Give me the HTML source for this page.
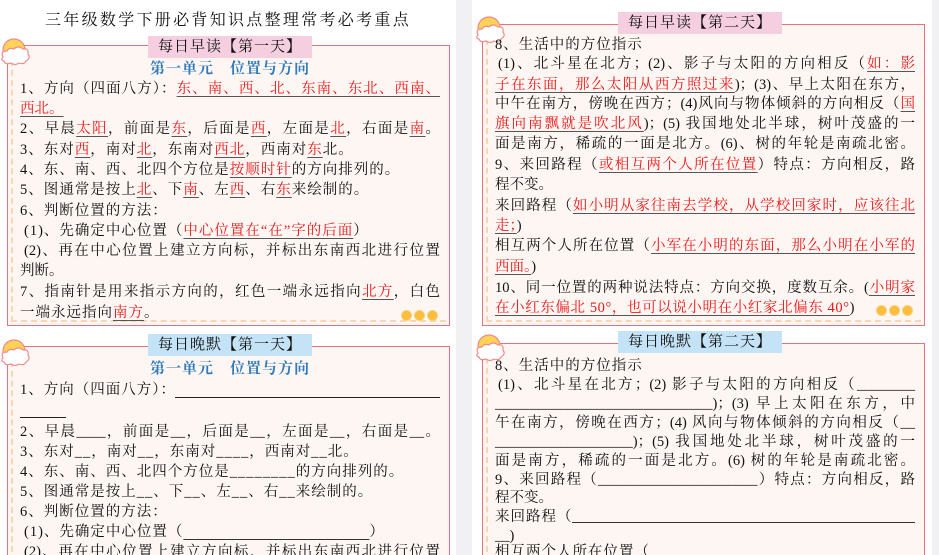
<!DOCTYPE html>
<html><head><meta charset="utf-8"><style>
*{margin:0;padding:0;box-sizing:border-box}
html,body{width:939px;height:555px;overflow:hidden}
body{background:#fff;font-family:"Liberation Serif","Noto Serif CJK SC",serif;color:#111}
#w{position:relative;width:939px;height:555px;overflow:hidden}
.gut{position:absolute;top:0;height:555px;background:#f1f1f4}
.box{position:absolute;border:1.5px solid #e9707c;background:#fdf6f3}
.box:before{content:"";position:absolute;left:3px;top:14px;bottom:3px;border-left:2px dashed #fbd6b0}
.box:after{content:"";position:absolute;left:3px;right:3px;bottom:3px;border-bottom:2px dashed #fbd6b0}
.box.open{border-bottom:none}
.box.open:after{display:none}
.tab{position:absolute;font-size:15px;line-height:22px;padding:0 10px;letter-spacing:1px;white-space:nowrap;transform:translateX(-50%)}
.pk{background:#f5cfe0}.bl{background:#c5e3f6}
.unit{position:absolute;color:#2f7bbd;font-weight:bold;font-size:15px;line-height:20px;white-space:nowrap;transform:translateX(-50%);letter-spacing:1px}
.l{position:absolute;font-size:14.5px;line-height:20px;white-space:nowrap}
.cut{height:13px;overflow:hidden}
.j{text-align:justify;text-align-last:justify}
.r{color:#f01818;text-decoration:underline;text-decoration-color:#555;text-underline-offset:3px}
.u{text-decoration:underline;text-decoration-color:#333;text-underline-offset:3px}
.sun{position:absolute;width:30px;height:32px}
.dots{position:absolute;white-space:nowrap}
.dots i{display:inline-block;width:11px;height:11px;border-radius:50%;background:#fbbd3a;border:1.5px solid #f9d07a;margin-left:2px}
</style></head><body><div id="w">
<div class="gut" style="left:456px;width:16px"></div>
<div class="gut" style="left:932px;width:7px"></div>

<div class="l" style="left:45px;top:11px;font-size:16px;letter-spacing:2.3px">三年级数学下册必背知识点整理常考必考重点</div>

<div class="box" style="left:7px;top:45px;width:443px;height:281px"></div>
<svg class="sun" style="left:0;top:35px" viewBox="0 0 30 32"><circle cx="14" cy="15" r="11" fill="#fdd257" stroke="#f08a8a" stroke-width="1.2"/><path d="M3 22 q-3 -6 4 -6 q2 -4 7 -2 q4 -4 9 0 q6 -1 5 5 q3 4 -2 7 q-2 4 -7 2 q-4 3 -8 0 q-6 2 -7 -2 q-4 -1 -1 -4z" fill="#fff" stroke="#f08a8a" stroke-width="1.2"/></svg>
<div class="tab pk" style="left:230px;top:36px">每日早读【第一天】</div>
<div class="unit" style="left:230px;top:59px">第一单元　位置与方向</div>
<div class="l j" style="left:20px;top:79px;width:420px">1、方向（四面八方）：<span class="r">东、南、西、北、东南、东北、西南、</span></div>
<div class="l" style="left:20px;top:99px"><span class="r">西北。</span></div>
<div class="l j" style="left:20px;top:119px;width:420px">2、早晨<span class="r">太阳</span>，前面是<span class="r">东</span>，后面是<span class="r">西</span>，左面是<span class="r">北</span>，右面是<span class="r">南</span>。</div>
<div class="l" style="left:20px;top:140px;letter-spacing:1px">3、东对<span class="r">西</span>，南对<span class="r">北</span>，东南对<span class="r">西北</span>，西南对<span class="r">东</span>北。</div>
<div class="l" style="left:20px;top:160px;letter-spacing:1px">4、东、南、西、北四个方位是<span class="r">按顺时针</span>的方向排列的。</div>
<div class="l" style="left:20px;top:180px;letter-spacing:1px">5、图通常是按上<span class="r">北</span>、下<span class="r">南</span>、左<span class="r">西</span>、右<span class="r">东</span>来绘制的。</div>
<div class="l" style="left:20px;top:201px;letter-spacing:1px">6、判断位置的方法：</div>
<div class="l" style="left:24px;top:221px;letter-spacing:1px">(1)、先确定中心位置（<span class="r">中心位置在“在”字的后面</span>）</div>
<div class="l j" style="left:24px;top:241px;width:416px">(2)、再在中心位置上建立方向标，并标出东南西北进行位置</div>
<div class="l" style="left:20px;top:261px">判断。</div>
<div class="l j" style="left:20px;top:282px;width:420px">7、指南针是用来指示方向的，红色一端永远指向<span class="r">北方</span>，白色</div>
<div class="l" style="left:20px;top:303px;letter-spacing:1px">一端永远指向<span class="r">南方</span>。</div>
<div class="dots" style="left:399px;top:308px"><i></i><i></i><i></i></div>

<div class="box open" style="left:7px;top:346px;width:443px;height:209px"></div>
<svg class="sun" style="left:0;top:336px" viewBox="0 0 30 32"><circle cx="14" cy="15" r="11" fill="#fdd257" stroke="#f08a8a" stroke-width="1.2"/><path d="M3 22 q-3 -6 4 -6 q2 -4 7 -2 q4 -4 9 0 q6 -1 5 5 q3 4 -2 7 q-2 4 -7 2 q-4 3 -8 0 q-6 2 -7 -2 q-4 -1 -1 -4z" fill="#fff" stroke="#f08a8a" stroke-width="1.2"/></svg>
<div class="tab bl" style="left:230px;top:334px">每日晚默【第一天】</div>
<div class="unit" style="left:230px;top:359px">第一单元　位置与方向</div>
<div class="l" style="left:20px;top:380px;letter-spacing:1px">1、方向（四面八方）：</div>
<div style="position:absolute;left:175px;top:397px;width:265px;border-top:1px solid #222"></div>
<div style="position:absolute;left:20px;top:417px;width:46px;border-top:1px solid #222"></div>
<div class="l j" style="left:20px;top:422px;width:420px">2、早晨____，前面是__，后面是__，左面是__，右面是__。</div>
<div class="l" style="left:20px;top:442px;letter-spacing:1px">3、东对__，南对__，东南对____，西南对__北。</div>
<div class="l" style="left:20px;top:462px;letter-spacing:1px">4、东、南、西、北四个方位是________的方向排列的。</div>
<div class="l" style="left:20px;top:482px;letter-spacing:1px">5、图通常是按上__、下__、左__、右__来绘制的。</div>
<div class="l" style="left:20px;top:502px;letter-spacing:1px">6、判断位置的方法：</div>
<div class="l" style="left:24px;top:522px;letter-spacing:1px">(1)、先确定中心位置（<span class="u">　　　　　　　　　　　　</span>）</div>
<div class="l j cut" style="left:24px;top:542px;width:416px">(2)、再在中心位置上建立方向标，并标出东南西北进行位置</div>

<div class="box" style="left:482px;top:24px;width:443px;height:302px"></div>
<svg class="sun" style="left:475px;top:13px" viewBox="0 0 30 32"><circle cx="14" cy="15" r="11" fill="#fdd257" stroke="#f08a8a" stroke-width="1.2"/><path d="M3 22 q-3 -6 4 -6 q2 -4 7 -2 q4 -4 9 0 q6 -1 5 5 q3 4 -2 7 q-2 4 -7 2 q-4 3 -8 0 q-6 2 -7 -2 q-4 -1 -1 -4z" fill="#fff" stroke="#f08a8a" stroke-width="1.2"/></svg>
<div class="tab pk" style="left:700px;top:12px">每日早读【第二天】</div>
<div class="l" style="left:495px;top:35px;letter-spacing:1px">8、生活中的方位指示</div>
<div class="l j" style="left:498px;top:54px;width:417px">(1)、北斗星在北方；(2)、影子与太阳的方向相反（<span class="r">如：影</span></div>
<div class="l j" style="left:495px;top:75px;width:420px"><span class="r">子在东面，那么太阳从西方照过来</span>)；(3)、早上太阳在东方，</div>
<div class="l j" style="left:495px;top:94px;width:420px">中午在南方，傍晚在西方；(4)风向与物体倾斜的方向相反（<span class="r">国</span></div>
<div class="l j" style="left:495px;top:114px;width:420px"><span class="r">旗向南飘就是吹北风</span>)；(5) 我国地处北半球，树叶茂盛的一</div>
<div class="l j" style="left:495px;top:134px;width:420px">面是南方，稀疏的一面是北方。(6)、树的年轮是南疏北密。</div>
<div class="l j" style="left:495px;top:155px;width:420px">9、来回路程（<span class="r">或相互两个人所在位置</span>）特点：方向相反，路</div>
<div class="l" style="left:495px;top:175px">程不变。</div>
<div class="l j" style="left:495px;top:196px;width:420px">来回路程（<span class="r">如小明从家往南去学校，从学校回家时，应该往北</span></div>
<div class="l" style="left:495px;top:216px"><span class="r">走；</span>)</div>
<div class="l j" style="left:495px;top:236px;width:420px">相互两个人所在位置（<span class="r">小军在小明的东面，那么小明在小军的</span></div>
<div class="l" style="left:495px;top:257px"><span class="r">西面。</span>)</div>
<div class="l j" style="left:495px;top:278px;width:420px">10、同一位置的两种说法特点：方向交换，度数互余。(<span class="r">小明家</span></div>
<div class="l" style="left:495px;top:298px;letter-spacing:0.6px"><span class="r">在小红东偏北 50°，也可以说小明在小红家北偏东 40°</span>)</div>
<div class="dots" style="left:874px;top:303px"><i></i><i></i><i></i></div>

<div class="box open" style="left:482px;top:343px;width:443px;height:212px"></div>
<svg class="sun" style="left:475px;top:331px" viewBox="0 0 30 32"><circle cx="14" cy="15" r="11" fill="#fdd257" stroke="#f08a8a" stroke-width="1.2"/><path d="M3 22 q-3 -6 4 -6 q2 -4 7 -2 q4 -4 9 0 q6 -1 5 5 q3 4 -2 7 q-2 4 -7 2 q-4 3 -8 0 q-6 2 -7 -2 q-4 -1 -1 -4z" fill="#fff" stroke="#f08a8a" stroke-width="1.2"/></svg>
<div class="tab bl" style="left:700px;top:331px">每日晚默【第二天】</div>
<div class="l" style="left:495px;top:356px;letter-spacing:1px">8、生活中的方位指示</div>
<div class="l j" style="left:498px;top:375px;width:417px">(1)、北斗星在北方；(2) 影子与太阳的方向相反（________</div>
<div class="l j" style="left:495px;top:394px;width:420px">______________________________)；(3) 早上太阳在东方，中</div>
<div class="l j" style="left:495px;top:413px;width:420px">午在南方，傍晚在西方；(4) 风向与物体倾斜的方向相反（__</div>
<div class="l j" style="left:495px;top:432px;width:420px">___________________)；(5) 我国地处北半球，树叶茂盛的一</div>
<div class="l j" style="left:495px;top:451px;width:420px">面是南方，稀疏的一面是北方。(6) 树的年轮是南疏北密。</div>
<div class="l j" style="left:495px;top:470px;width:420px">9、来回路程（______________________）特点：方向相反，路</div>
<div class="l" style="left:495px;top:488px">程不变。</div>
<div class="l" style="left:495px;top:507px;letter-spacing:1px">来回路程（</div>
<div style="position:absolute;left:572px;top:522px;width:343px;border-top:1px solid #333"></div>
<div class="l cut" style="left:495px;top:526px;height:20px">__)</div>
<div class="l cut" style="left:495px;top:542px;letter-spacing:1px">相互两个人所在位置（</div>
</div></body></html>
